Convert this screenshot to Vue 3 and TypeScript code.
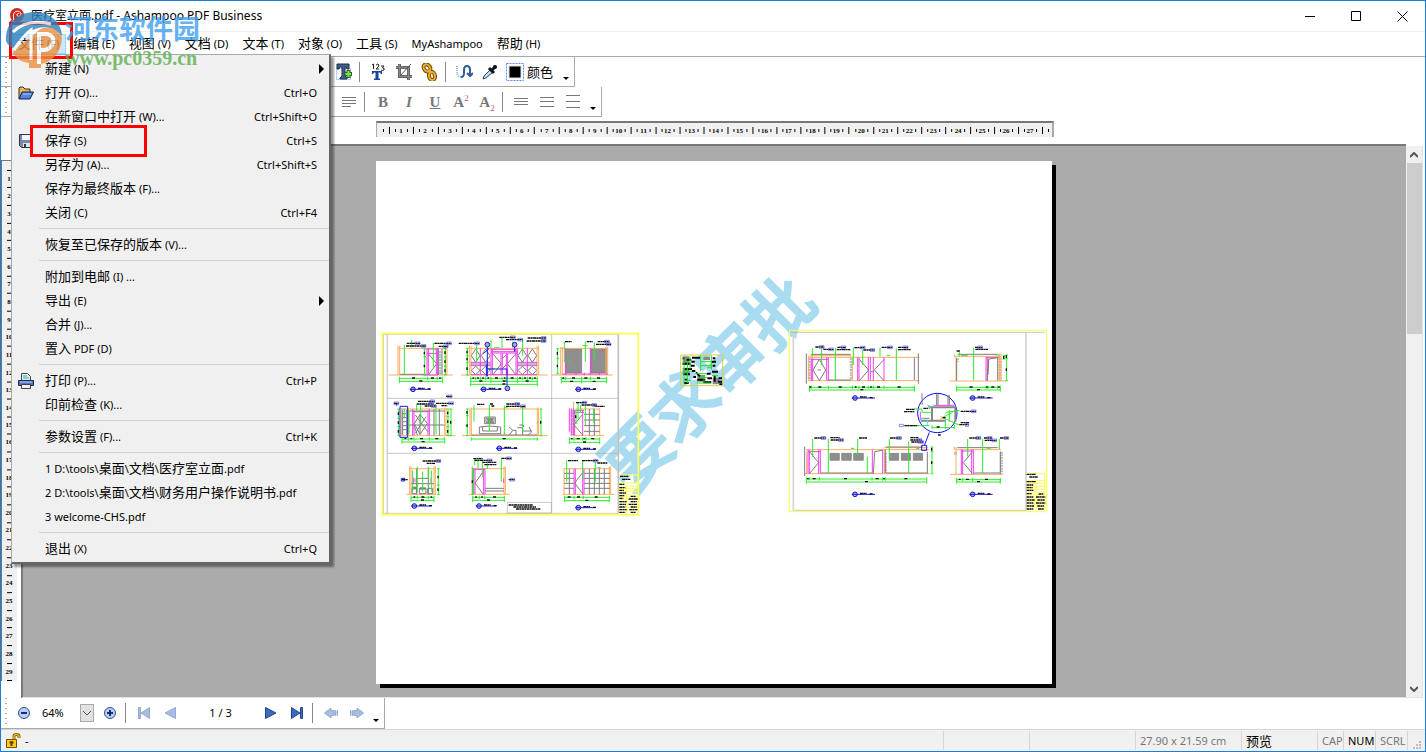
<script setup lang="ts">
import { ref } from 'vue'

interface MenuEntry {
  text: string
  key?: string
  icon?: 'folder' | 'disk' | 'printer'
  sub?: boolean
}

interface Elevation {
  orange?: string
  magenta?: string
  grey?: string
  thick?: string
  hatch?: string
  green?: string
  blue?: string
  h: number[][]
  v: number[][]
  labels: number[][]
  tag: number[]
}

/** Splits a caption into Chinese and Latin runs, which use different sizes. */
function runs(text: string): { s: string; cjk: boolean }[] {
  return (text.match(/[\u4e00-\u9fff]+|[^\u4e00-\u9fff]+/g) ?? []).map((s) => ({
    s,
    cjk: /[\u4e00-\u9fff]/.test(s),
  }))
}

const title = '医疗室立面.pdf - Ashampoo PDF Business'
const menus = ['文件 (F)', '编辑 (E)', '视图 (V)', '文档 (D)', '文本 (T)', '对象 (O)', '工具 (S)', 'MyAshampoo', '帮助 (H)']

const groups: MenuEntry[][] = [
  [
    { text: '新建 (N)', sub: true },
    { text: '打开 (O)...', key: 'Ctrl+O', icon: 'folder' },
    { text: '在新窗口中打开 (W)...', key: 'Ctrl+Shift+O' },
    { text: '保存 (S)', key: 'Ctrl+S', icon: 'disk' },
    { text: '另存为 (A)...', key: 'Ctrl+Shift+S' },
    { text: '保存为最终版本 (F)...' },
    { text: '关闭 (C)', key: 'Ctrl+F4' },
  ],
  [{ text: '恢复至已保存的版本 (V)...' }],
  [
    { text: '附加到电邮 (I) ...' },
    { text: '导出 (E)', sub: true },
    { text: '合并 (J)...' },
    { text: '置入 PDF (D)' },
  ],
  [
    { text: '打印 (P)...', key: 'Ctrl+P', icon: 'printer' },
    { text: '印前检查 (K)...' },
  ],
  [{ text: '参数设置 (F)...', key: 'Ctrl+K' }],
  [
    { text: '1 D:\\tools\\桌面\\文档\\医疗室立面.pdf' },
    { text: '2 D:\\tools\\桌面\\文档\\财务用户操作说明书.pdf' },
    { text: '3 welcome-CHS.pdf' },
  ],
  [{ text: '退出 (X)', key: 'Ctrl+Q' }],
]

const zoom = ref('64%')
const pageField = ref('1 / 3')

const leftSheet: Elevation[] = [
  {
    orange: 'M38 150H230M66 62V150M71 62V150M66 70H212M208 64V150M213 64V150',
    magenta: 'M146 150H186M153 70V150M157 70V150M181 70V150M185 70V150M153 72H185M153 85H185',
    grey: 'M157 86L182 116L157 150M71 148H150M187 70V150M198 70V150',
    hatch: 'M192 78V150',
    green: 'M85 60V148M107 45V68M172 55V125M185 55H172',
    h: [[160, 70, 155, 184, 200], [169, 70, 200]],
    v: [[208, 70, 96, 124, 150], [146, 72, 95, 150]],
    labels: [[92, 55, 40, 1], [90, 63, 60, 1], [176, 55, 50, 1], [188, 64, 28, 1]],
    tag: [111, 193, 52],
  },
  {
    orange: 'M255 150H515M280 62V150M285 62V150M483 62V150M488 62V150M280 70H488',
    magenta: 'M345 70V150M349 70V150M375 85V150M379 85V150M391 85V150M395 85V150M420 70V150M424 70V150M345 73H424M345 80H424M345 84H424M284 112H344M284 122H344M424 112H484M424 122H484M284 149H484M313 70V150M454 70V150',
    grey: 'M299 72L286 92L299 112L312 92ZM329 72L316 92L329 112L342 92ZM439 72L426 92L439 112L452 92ZM469 72L456 92L469 112L482 92ZM299 124L286 136L299 149L312 136ZM329 124L316 136L329 149L342 136ZM439 124L426 136L439 149L452 136ZM469 124L456 136L469 149L482 136ZM350 86L376 116L350 150M420 86L394 116L420 150M380 100L390 90M380 130L390 120M284 117H344M424 117H484',
    green: 'M302 60V112M345 45V70M355 68H370M378 38V70M410 50V68M440 45V92M336 130H356',
    blue: 'M334 66V154M331 118V154M416 66V80M334 132H393V182M322 86L340 70',
    h: [[160, 284, 299, 313, 329, 345, 378, 393, 424, 439, 454, 469, 484], [169, 284, 345, 424, 484], [178, 284, 484]],
    v: [[274, 70, 92, 112, 150]],
    labels: [[248, 55, 62, 1], [370, 37, 48, 1], [390, 44, 50, 1], [455, 39, 55, 1], [452, 48, 58, 1]],
    tag: [323, 193, 52],
  },
  {
    orange: 'M528 150H710M554 66V150M559 66V150M690 66V150M695 66V150M554 70H695',
    magenta: 'M560 147H695M568 70V150M643 70V150M600 143V150M625 143V150M670 143V150',
    thick: 'M569 71H617V144H569ZM644 71H692V144H644Z',
    green: 'M565 50V110H580M628 50V110M655 52V108M620 62H635',
    h: [[160, 556, 568, 617, 643, 692], [170, 556, 617, 692]],
    v: [[545, 70, 100, 146]],
    labels: [[567, 50, 20, 0], [632, 50, 18, 0], [665, 50, 35, 1], [660, 58, 45, 1]],
    tag: [607, 193, 52],
  },
  {
    orange: 'M70 332H238M77 248V332M206 248V332M210 248V332M77 252H210M97 250V332',
    magenta: 'M110 252V332M114 262V332M156 262V332M160 252V332M110 260H160',
    grey: 'M100 258H206M100 300H206M174 252V332M190 252V332M115 296L132 268L154 296L132 328ZM132 268V328M118 270L155 320M118 325L150 275M114 300L124 330M80 254V330M92 254V330M80 266H92M80 278H92M80 290H92M80 302H92M80 314H92',
    blue: 'M72 244H95V337H72ZM62 235V242',
    green: 'M99 256V326M122 240V262M134 235V300M180 240V328M85 250V280',
    h: [[342, 78, 97, 114, 160, 206], [351, 78, 206]],
    v: [[216, 252, 275, 305, 332], [225, 252, 332], [68, 252, 280, 305, 332]],
    labels: [[126, 229, 50, 1], [122, 237, 50, 1], [146, 243, 34, 1], [180, 235, 52, 1], [210, 214, 18, 1], [54, 235, 14, 1], [196, 242, 18, 0]],
    tag: [115, 370, 54],
  },
  {
    orange: 'M258 332H515M282 248V332M286 248V332M484 248V332M488 248V332M286 252H484',
    grey: 'M326 276H358V296H326ZM330 280H354V292H330ZM310 306Q342 300 374 306V326H310ZM320 306V318H364V306M400 306L410 316L400 330M410 316H420V330M424 308H440V330M440 318H468M460 306L466 322L454 332M430 300H442V306M286 330H484',
    thick: 'M335 282H350V290H335Z',
    green: 'M294 240V290M340 240V318M385 242V330M440 244V318M386 248H394M484 290V295',
    h: [[342, 286, 484]],
    v: [[274, 252, 272, 332], [495, 252, 332]],
    labels: [[303, 238, 22, 0], [342, 237, 10, 0], [346, 243, 10, 0], [391, 237, 40, 1], [390, 244, 58, 1]],
    tag: [370, 370, 54],
  },
  {
    orange: 'M590 332H685M593 230V332M671 250V332M600 252H671',
    magenta: 'M580 250V320M586 250V332M592 250V332M596 256V332M620 256V332M592 256H624M592 262H624',
    grey: 'M620 268L594 300L620 330M624 268H671M624 285H671M624 302H671M624 319H671M640 252V332M655 252V332',
    hatch: 'M588 254V330',
    green: 'M606 234V282M614 240V262M628 244V300M653 250V293',
    h: [[342, 580, 594, 620, 630, 671], [352, 580, 671]],
    v: [[600, 256, 294]],
    labels: [[600, 233, 32, 1], [617, 240, 45, 1], [656, 244, 30, 0]],
    tag: [607, 373, 52],
  },
  {
    orange: 'M92 508H180M101 424V508M105 424V508M174 424V508M178 424V508M101 431H178',
    grey: 'M122 431V508M157 431V508M105 476H174M122 460H157M108 490H122V506H108ZM130 490H150V506H130ZM155 490H170V506H155Z',
    thick: 'M108 486H120V492H108ZM132 488H148V493H132Z',
    magenta: 'M112 458V474M117 460V472M165 458V474',
    green: 'M110 436V500M124 425V500M140 440V500M157 425V460M167 436V500',
    blue: 'M76 460H86V468H76Z',
    h: [[517, 105, 124, 157, 174], [526, 105, 174]],
    v: [[187, 431, 480, 508]],
    labels: [[140, 408, 54, 1], [152, 415, 26, 0], [78, 464, 18, 0]],
    tag: [115, 543, 52],
  },
  {
    orange: 'M278 508H400M289 424V508M384 424V508M388 424V508M289 431H388',
    magenta: 'M293 431V508M297 431V508M323 431V508M327 431V508M293 433H327M383 460V474',
    grey: 'M322 440L297 474L322 508M327 490H384M327 498H384M289 436V506',
    green: 'M296 400V420M306 405V430M319 408V456M334 415V432M376 402V470M291 432V505',
    h: [[517, 290, 310, 326, 385], [526, 290, 385]],
    v: [[290, 431, 508]],
    labels: [[292, 401, 28, 0], [296, 406, 52, 1], [320, 412, 42, 0], [325, 419, 36, 0], [376, 400, 30, 1], [398, 464, 18, 1]],
    tag: [309, 543, 52],
  },
  {
    orange: 'M560 508H716M564 430V508M700 424V508M704 424V508M564 431H704',
    magenta: 'M594 431V508M598 431V508M620 431V508M624 431V508',
    grey: 'M622 440L596 474L622 508M564 445H594M564 460H594M564 475H594M564 490H594M580 431V508M624 445H702M624 460H702M624 475H702M624 490H702M640 431V508M655 431V508M670 431V508M685 431V508',
    green: 'M572 405V470M620 408V460M658 410V470M665 428H674',
    h: [[517, 566, 594, 622, 700], [527, 566, 700]],
    v: [],
    labels: [[576, 407, 30, 0], [618, 407, 48, 1], [664, 414, 30, 0]],
    tag: [607, 548, 52],
  },
]

const rightSheet: Elevation[] = [
  {
    orange: 'M68 167H400M68 97H400M75 92H195M75 88V97M193 88V97M68 92V167M199 97V167',
    magenta: 'M76 100V167M80 100V167M122 97V167M127 97V167M76 103H127M215 97V167M219 97V167M247 97V167M253 97V167M262 97V167M294 97V167',
    grey: 'M61 85V176M397 85V176M100 103L81 135L100 167L119 135ZM95 135H105M220 103L248 135L220 167M294 103L265 135L294 167M75 88H193M385 97V165M126 165H195M253 140H262',
    hatch: 'M70 100V167M196 100V167',
    green: 'M80 70V95M107 72V120M148 68V165M202 68V120M230 76V120M282 68V95M331 70V165M302 92H312',
    h: [[187, 70, 76, 127, 199, 219, 247, 262, 294, 385], [195, 70, 385]],
    v: [],
    labels: [[88, 66, 26, 1], [112, 73, 30, 1], [154, 67, 25, 1], [152, 74, 42, 0], [205, 68, 32, 1], [232, 75, 34, 1], [287, 67, 32, 1], [336, 67, 30, 1], [336, 74, 38, 0]],
    tag: [207, 219, 60],
  },
  {
    orange: 'M490 168H660M505 94H645M505 88V97M510 97V168M640 85V168M645 85V168',
    magenta: 'M600 97V167M604 97V167M600 98H640',
    grey: 'M515 88H635M512 100V167M606 150L608 102L636 98M603 167L608 102M635 100V167',
    hatch: 'M642 100V167M514 100V110',
    green: 'M563 68V167M520 76V95M628 90H640M525 92H545',
    h: [[187, 512, 600, 606, 635, 643], [195, 512, 643]],
    v: [[662, 90, 100, 167], [654, 92, 102]],
    labels: [[567, 67, 22, 1], [568, 73, 38, 0], [512, 78, 10, 0]],
    tag: [560, 219, 60],
  },
  {
    orange: 'M60 374H430M55 446H430M295 374V446M294 368H425M420 366V374M62 380V446',
    magenta: 'M66 374V446M70 374V446M98 374V446M103 374V446M66 380H103M259 374V446M290 374V446',
    grey: 'M56 365V453M72 382L98 413L72 444M300 366H410M105 444H258M262 446L266 380L288 376M301 444H425M298 374V444M424 380V445',
    thick: 'M132 385H160V406H132ZM167 385H196V406H167ZM203 385H232V406H203ZM310 385H338V406H310ZM346 385H374V406H346ZM382 385H410V406H382Z',
    hatch: 'M298 384V444',
    green: 'M80 342V395M127 342V444M215 342V390M310 342V400M368 350V444M244 395V444M390 370H400M195 370H205',
    blue: 'M430 322L415 362M407 361H422V376H407Z',
    h: [[462, 61, 70, 100, 258, 290, 298, 422], [471, 61, 422]],
    v: [[438, 366, 380, 446]],
    labels: [[85, 339, 34, 1], [133, 338, 28, 0], [134, 345, 38, 1], [219, 339, 24, 0], [312, 339, 34, 1], [373, 338, 24, 0], [373, 345, 34, 1], [376, 351, 36, 1]],
    tag: [207, 508, 60],
  },
  {
    orange: 'M492 448H650M505 374H645M510 366V448M505 366V374M640 364V374',
    magenta: 'M526 374V448M530 374V448M557 374V448M562 374V448M526 378H562',
    grey: 'M514 368H635M558 382L532 413L558 444M562 444H643M643 380V446',
    hatch: 'M646 380V446M508 380V390',
    green: 'M545 342V395M590 342V444M640 342V372M602 370H614',
    h: [[464, 512, 530, 560, 643], [471, 512, 643]],
    v: [],
    labels: [[550, 339, 34, 1], [594, 339, 24, 1], [596, 346, 36, 1], [642, 339, 26, 1]],
    tag: [560, 508, 60],
  },
]

/** Green dimension chains of an elevation. */
function dims(e: Elevation): string {
  const h = e.h.map(([y, ...xs]) => `M${xs[0]} ${y}H${xs[xs.length - 1]}` + xs.map((x) => `M${x} ${y - 5}v10`).join(''))
  const v = e.v.map(([x, ...ys]) => `M${x} ${ys[0]}V${ys[ys.length - 1]}` + ys.map((y) => `M${x - 4} ${y}h8`).join(''))
  return h.join('') + v.join('')
}

/** Black figures in the middle of each dimension. */
function figures(e: Elevation): string {
  const out: string[] = []
  for (const [y, ...xs] of e.h) {
    for (let i = 1; i < xs.length; i++) {
      const mid = Math.round((xs[i] + xs[i - 1]) / 2)
      const w = xs[i] - xs[i - 1] > 20 ? 10 : 5
      out.push(`M${mid - w / 2} ${y - 1}h${w}`)
    }
  }
  for (const [x, ...ys] of e.v) {
    for (let i = 1; i < ys.length; i++) out.push(`M${x - 1} ${Math.round((ys[i] + ys[i - 1]) / 2) - 4}v8`)
  }
  return out.join('')
}

const captions = (e: Elevation): string => e.labels.map(([x, y, w]) => `M${x} ${y}h${w}`).join('')
const marks = (e: Elevation): string =>
  e.labels.filter((l) => l[3]).map(([x, y, w]) => `M${x + w - 14} ${y - 4}h14v8h-14z`).join('')

const sheets = [
  { id: 'left', shift: 'translate(0 492)', items: leftSheet },
  { id: 'right', shift: 'translate(1230 492)', items: rightSheet },
]

const hMarks = Array.from({ length: 27 }, (_, i) => i + 1)
const vMarks = Array.from({ length: 29 }, (_, i) => i + 1)
const CM_X = 2423
const CM_Y = 1764
const hx = (n: number): number => Math.round((n * CM_X) / 100)
const vy = (n: number): number => Math.round((n * CM_Y) / 100)
const hTall = Array.from({ length: 28 }, (_, i) => `M${hx(i + 0.5)} 4v7`).join('')
const hShort = Array.from({ length: 28 }, (_, i) => `M${hx(i + 0.25)} 6v3M${hx(i + 0.75)} 6v3`).join('')
const vTicks = Array.from({ length: 30 }, (_, i) => `M5 ${vy(i + 0.5)}h5`).join('')
</script>

<template>
  <div class="window">
    <header class="titlebar">
      <svg class="app-logo" viewBox="0 0 16 16" width="16" height="16" aria-hidden="true">
        <circle cx="8" cy="7" r="7" fill="#d3261c" />
        <path d="M1 15L5 10" stroke="#d3261c" stroke-width="2" />
        <path d="M4 13C6 10 3 8 5 5C7 2 12 3 12 6C12 9 8 9 8 7C8 5 10 5 10 6" fill="none" stroke="#fff" stroke-width="1" />
      </svg>
      <h1 class="title">
        <span v-for="(r, i) in runs(title)" :key="i">{{ r.s }}</span>
      </h1>
      <div class="win-buttons">
        <button type="button" aria-label="最小化"><svg viewBox="0 0 11 11" width="11" height="11"><path d="M0 5.5H10" /></svg></button>
        <button type="button" aria-label="最大化"><svg viewBox="0 0 11 11" width="11" height="11"><path d="M.5 .5H9.500V9.500H.5Z" /></svg></button>
        <button type="button" aria-label="关闭"><svg viewBox="0 0 11 11" width="11" height="11"><path d="M.5 .5L10.500 10.500M10.500 .5L.5 10.500" /></svg></button>
      </div>
    </header>

    <nav class="menubar">
      <button v-for="(m, i) in menus" :key="m" type="button" :class="{ active: i === 0 }">
        <span v-for="(r, j) in runs(m)" :key="j" :class="{ cjk: r.cjk }">{{ r.s }}</span>
      </button>

      <div class="dropdown" role="menu">
        <div v-for="(g, gi) in groups" :key="gi" class="group">
          <button v-for="e in g" :key="e.text" type="button" role="menuitem" class="entry">
            <span class="entry-icon">
              <svg v-if="e.icon === 'folder'" viewBox="0 0 16 14" width="16" height="14">
                <path d="M1 13V2L2 1H5L7 3H12V6" fill="#e8b45c" stroke="#3c2c10" />
                <path d="M1 13L4 6H15.500L12 13Z" fill="#4f86e0" stroke="#14214d" />
                <path d="M5 8H13" stroke="#a9c8fa" />
              </svg>
              <svg v-else-if="e.icon === 'disk'" viewBox="0 0 14 14" width="14" height="14">
                <path d="M.5 .5H13.500V13.500H2.500L.5 11.500Z" fill="#7b88a8" stroke="#30364a" />
                <path d="M3 1H11V6H3Z" fill="#f2f5fb" />
                <path d="M4 9H11V13H4Z" fill="#dde3ee" />
                <path d="M5 10H7V13H5Z" fill="#30364a" />
              </svg>
              <svg v-else-if="e.icon === 'printer'" viewBox="0 0 16 16" width="16" height="16">
                <path d="M3.500 7V.5H9.500L12.500 3.500V7" fill="#d8f0f0" stroke="#3d4f55" />
                <path d="M5 3H9M5 5H11" stroke="#57a4a8" />
                <path d="M.5 7.500H15.500V12.500H.5Z" fill="#5575c4" stroke="#1d2750" />
                <path d="M2 9H14" stroke="#b8ccf5" />
                <path d="M3.500 11.500H12.500V15.500H3.500Z" fill="#f3f3f3" stroke="#3d4047" />
              </svg>
            </span>
            <span class="entry-text"><span v-for="(r, j) in runs(e.text)" :key="j" :class="{ cjk: r.cjk }">{{ r.s }}</span></span>
            <span v-if="e.key" class="entry-key">{{ e.key }}</span>
            <svg v-if="e.sub" class="entry-sub" viewBox="0 0 5 10" width="5" height="10"><path d="M0 0L5 5L0 10Z" /></svg>
          </button>
        </div>
      </div>
    </nav>

    <div class="toolbar row-one">
      <button type="button" aria-label="添加文本框">
        <svg viewBox="0 0 18 18" width="18" height="18">
          <path d="M1.500 5.500H15.500V16.500H1.500Z" fill="none" stroke="#6d9cf0" stroke-dasharray="1 1" />
          <path d="M2 1H14V6H12L11 4H10V13L12 15V16H5V15L7 13V4H5L4 6H2Z" fill="#3f5f8c" stroke="#1e2c45" />
          <path d="M13.500 7V15M9.500 11H17" stroke="#2f6a20" stroke-width="4" />
          <path d="M13.500 8V14M10.500 11H16" stroke="#7fe060" stroke-width="2" />
        </svg>
      </button>
      <i class="sep" />
      <button type="button" aria-label="编号">
        <svg viewBox="0 0 18 18" width="18" height="18">
          <path d="M3 2L4.500 1V6M7 2Q9 0 10 2Q10 4 7 6H10M12 3H15L13.500 5Q16 5 15 7Q14 8 12 7" fill="none" stroke="#222" />
          <path d="M3 8H13V11H12L11 9.500H9.500V15.500H11V17H5V15.500H6.500V9.500H5L4 11H3Z" fill="#17449c" />
        </svg>
      </button>
      <button type="button" aria-label="裁剪">
        <svg viewBox="0 0 18 18" width="18" height="18" fill="none">
          <path d="M4.500 1V13.500H17M1 4.500H13.500V17" stroke="#666" stroke-width="3" />
          <path d="M4.500 1V13.500H17M1 4.500H13.500V17" stroke="#888" stroke-width="1" />
          <path d="M5 13L16 1" stroke="#555" />
        </svg>
      </button>
      <button type="button" aria-label="链接">
        <svg viewBox="0 0 18 18" width="18" height="18" fill="none">
          <ellipse cx="6" cy="5" rx="3" ry="4" transform="rotate(-40 6 5)" stroke="#69450a" stroke-width="4" />
          <ellipse cx="11" cy="13" rx="3" ry="4" transform="rotate(-10 11 13)" stroke="#69450a" stroke-width="4" />
          <ellipse cx="6" cy="5" rx="3" ry="4" transform="rotate(-40 6 5)" stroke="#edae2d" stroke-width="2" />
          <ellipse cx="11" cy="13" rx="3" ry="4" transform="rotate(-10 11 13)" stroke="#edae2d" stroke-width="2" />
          <path d="M7 7L11 10" stroke="#edae2d" stroke-width="2" />
        </svg>
      </button>
      <i class="sep" />
      <button type="button" aria-label="文本流">
        <svg viewBox="0 0 18 18" width="18" height="18" fill="none" stroke="#34599c" stroke-width="2">
          <path d="M2 3V8Q2 14 6 14" stroke-dasharray="1 1" stroke="#8badde" />
          <path d="M6 14Q9 14 9 10V7Q9 3 12 3Q15 3 15 7V12M12 10L15 13L18 10" />
        </svg>
      </button>
      <button type="button" aria-label="吸管">
        <svg viewBox="0 0 18 18" width="18" height="18">
          <path d="M2 16L3 13L9 7L12 9L5 15Z" fill="#b8dcf3" stroke="#345" />
          <path d="M8 5L13 10M10 8L15 3" stroke="#15151c" stroke-width="3" />
          <circle cx="14" cy="4" r="2" fill="#15151c" />
        </svg>
      </button>
      <button type="button" aria-label="颜色" class="swatch">
        <svg viewBox="0 0 18 18" width="18" height="18">
          <path d="M.5 .5H17.500V17.500H.5Z" fill="#fff" stroke="#5b8def" stroke-dasharray="2 1" />
          <path d="M3 3H15V15H3Z" fill="#000" stroke="#ddd" />
        </svg>
      </button>
      <span class="cjk">颜色</span>
      <i class="caret" />
    </div>

    <div class="toolbar row-two">
      <button type="button" aria-label="两端对齐"><svg viewBox="0 0 16 12" width="16" height="12"><path d="M1 1.500H15M1 4.500H15M1 7.500H15M1 10.500H10" stroke="#777" /></svg></button>
      <i class="sep" />
      <button type="button" class="glyph">B</button>
      <button type="button" class="glyph italic">I</button>
      <button type="button" class="glyph under">U</button>
      <button type="button" class="glyph">A<sup>2</sup></button>
      <button type="button" class="glyph">A<sub>2</sub></button>
      <i class="sep" />
      <button type="button" aria-label="紧凑行距"><svg viewBox="0 0 14 14" width="14" height="14"><path d="M0 3.500H14M0 6.500H14M0 9.500H14" stroke="#777" /></svg></button>
      <button type="button" aria-label="中等行距"><svg viewBox="0 0 14 14" width="14" height="14"><path d="M0 2.500H14M0 6.500H14M0 11.500H14" stroke="#777" /></svg></button>
      <button type="button" aria-label="宽行距"><svg viewBox="0 0 14 14" width="14" height="14"><path d="M0 .5H14M0 6.500H14M0 12.500H14" stroke="#777" /></svg></button>
      <i class="caret" />
    </div>

    <div class="h-ruler-row">
      <div class="h-ruler">
        <svg viewBox="0 0 676 13" width="100%" height="13">
          <path :d="hTall" stroke="#000" transform="translate(0.5 0)" />
          <path :d="hShort" stroke="#000" transform="translate(0.5 0)" />
          <text v-for="n in hMarks" :key="n" :x="hx(n)" y="10" text-anchor="middle">{{ n }}</text>
        </svg>
      </div>
    </div>

    <main class="work">
      <div class="v-ruler">
        <svg viewBox="0 0 16 521" width="16" height="100%" preserveAspectRatio="none">
          <path :d="vTicks" stroke="#000" transform="translate(0 0.5)" />
          <text v-for="n in vMarks" :key="n" x="7" :y="vy(n) + 2" text-anchor="middle">{{ n }}</text>
        </svg>
      </div>

      <section class="canvas">
        <svg class="page" viewBox="0 0 2028 1569">
          <text class="stamp" x="0" y="77" text-anchor="middle" transform="translate(994 663) rotate(-45)">要求审批</text>

          <g v-for="s in sheets" :key="s.id" :transform="s.shift">
            <template v-if="s.id === 'left'">
              <path class="frame" d="M34 28V564M727 28V564" />
              <path class="rule" d="M22 28V565H727V28ZM34 220H727M34 385H727M527 28V564" />
              <path class="yellow" d="M19 26H787V569H19Z" />
              <path class="yellow-thin" d="M728 450H787M728 474H787M728 483H787M728 491H787M728 499H787M728 507H787M728 515H787M728 523H787M728 531H787M728 539H787M728 547H787M728 555H787M752 483V566M787 450V566" />
              <path class="rule" d="M394 532H526V564H394Z" />
              <path class="black-text" d="M398 540H470M412 546H480M420 552H494M732 454H758M738 463H764M730 478H745M730 488H748M730 496H744M730 504H750M730 512H746M730 520H742M730 530H752M730 538H750M730 546H748M730 554H752M730 562H748M764 514H780M758 522H786M764 530H782M758 538H784M764 546H782M760 554H784M764 562H780" />
            </template>
            <template v-else>
              <path class="frame" d="M22 20V556M720 22V556" />
              <path class="rule" d="M14 22H778M22 556H720" />
              <path class="yellow-thin" d="M10 16H782V560H10ZM722 446H778M722 467H778M722 475H778M722 484H778M722 493H778M722 501H778M722 510H778M722 519H778M722 528H778M722 537H778M722 546H778M750 475V556M776 446V556" />
              <path class="black-text" d="M722 448H750M730 456H756M722 470H750M722 480H742M722 488H740M722 496H742M722 506H738M722 516H742M722 525H746M722 534H742M722 543H744M722 552H742M758 507H772M750 516H778M754 525H776M750 534H778M754 543H774M756 552H774" />
              <circle cx="454" cy="264" r="59" class="lens" />
              <path class="grey" d="M408 240V205M452 240V207M456 240V207M486 240V210M490 240V210M428 240L430 252M405 280H430M437 288V250" />
              <path class="heavy" d="M404 287H480M430 247H508M438 248V286M508 247V290" />
              <path class="magenta" d="M445 241H505M403 260V284" />
              <path class="cyan" d="M424 240L434 248M440 241H446M403 281H414M425 285V300" />
              <path class="green" d="M384 252H408V262H437M480 262L520 256M470 278L520 300M466 280L500 262M438 300V312M478 290V312M438 308H505M490 255V290M505 300V312M354 302H430" />
              <path class="orange" d="M462 272L474 284M474 272L462 284" />
              <path class="black-text" d="M360 253H386M354 260H386M356 302H394M524 259H570M524 293H550M520 299H548M452 306H462M412 250H426M456 330H464M470 278H480" />
              <path class="blue-mark" d="M340 298H352V305H340ZM556 255H570V263H556ZM538 295H548V304H538Z" />
            </template>
            <g v-for="(e, i) in s.items" :key="i">
              <path v-if="e.hatch" class="hatch" :d="e.hatch" />
              <path v-if="e.thick" class="solid" :d="e.thick" />
              <path class="orange" :d="e.orange" />
              <path v-if="e.magenta" class="magenta" :d="e.magenta" />
              <path v-if="e.grey" class="grey" :d="e.grey" />
              <path class="green" :d="e.green" />
              <path class="green" :d="dims(e)" />
              <path class="black-text" :d="figures(e)" />
              <path v-if="e.blue" class="blue" :d="e.blue" />
              <path class="black-text" :d="captions(e)" />
              <path class="blue-mark" :d="marks(e)" />
              <circle class="tag" :cx="e.tag[0]" :cy="e.tag[1]" r="7" />
              <path class="blue" :d="`M${e.tag[0] - 10} ${e.tag[1]}H${e.tag[0] + e.tag[2]}`" />
              <path class="black-text" :d="`M${e.tag[0] + 15} ${e.tag[1] - 3}h20M${e.tag[0] + 44} ${e.tag[1] - 1}h9`" />
            </g>
            <g v-if="s.id === 'left'">
              <circle class="tag" cx="334" cy="59" r="7" />
              <circle class="tag" cx="416" cy="59" r="7" />
              <circle class="tag" cx="394" cy="190" r="7" />
            </g>
          </g>

          <g transform="translate(642 312)">
            <path class="grey-blob" d="M288 274V300M288 308V330M350 275V285M322 340H345M378 338V358" />
            <path class="black-blob" d="M278 280H284M290 284H304M278 296H302M284 312H306M280 328H300M284 344H294M282 354H296M304 290H314M306 318H316M318 322L330 334M322 344H346M340 352H364M352 340H366M368 280H376M364 290H378M368 302H376M366 320H384M374 332V350M386 340H396M384 350H398M388 358H398M306 278H330M302 302H314M310 336H318M350 326H362" />
            <path class="green-blob" d="M282 274V358M292 290V354M300 276V312M332 272V318M364 272V314M332 290H364M332 302H366M316 326H350M320 354H362M342 334V350M352 308H366M366 332H384M278 320H302M286 346H304M326 338H352" />
            <path class="olive" d="M272 270H398V362H272Z" />
          </g>
        </svg>
      </section>

      <div class="scrollbar">
        <button type="button" aria-label="向上滚动"><svg viewBox="0 0 8 6" width="8" height="6"><path d="M0 5L4 1L8 5" /></svg></button>
        <div class="track"><div class="thumb" /></div>
        <button type="button" aria-label="向下滚动"><svg viewBox="0 0 8 6" width="8" height="6"><path d="M0 1L4 5L8 1" /></svg></button>
      </div>
    </main>

    <div class="navbar">
      <div class="nav-tools">
        <button type="button" aria-label="缩小">
          <svg viewBox="0 0 14 14" width="14" height="14"><circle cx="7" cy="7" r="5.500" fill="#b9d0f5" stroke="#344b94" /><path d="M4 7H10" stroke="#182d78" stroke-width="2" /></svg>
        </button>
        <label class="zoom-box">
          <select v-model="zoom" aria-label="缩放"><option>64%</option><option>100%</option></select>
          <span class="zoom-arrow"><svg viewBox="0 0 8 6" width="8" height="6"><path d="M0 1L4 5L8 1" /></svg></span>
        </label>
        <button type="button" aria-label="放大">
          <svg viewBox="0 0 14 14" width="14" height="14"><circle cx="7" cy="7" r="5.500" fill="#b9d0f5" stroke="#344b94" /><path d="M4 7H10M7 4V10" stroke="#182d78" stroke-width="2" /></svg>
        </button>
        <i class="sep" />
        <button type="button" class="dim" aria-label="第一页"><svg viewBox="0 0 12 12" width="12" height="12"><path d="M.5 .5H2.500V11.500H.5ZM11.500 .5V11.500L3 6Z" /></svg></button>
        <button type="button" class="dim" aria-label="上一页"><svg viewBox="0 0 12 12" width="12" height="12"><path d="M11.500 .5V11.500L1 6Z" /></svg></button>
        <input v-model="pageField" aria-label="页码" />
        <button type="button" class="strong" aria-label="下一页"><svg viewBox="0 0 12 12" width="12" height="12"><path d="M.5 .5V11.500L11 6Z" /></svg></button>
        <button type="button" class="strong" aria-label="最后一页"><svg viewBox="0 0 12 12" width="12" height="12"><path d="M.5 .5V11.500L9 6ZM9.500 .5H11.500V11.500H9.500Z" /></svg></button>
        <i class="sep" />
        <button type="button" class="dim" aria-label="后退"><svg viewBox="0 0 14 12" width="14" height="12"><path d="M.5 6L7 1V3.500H10V8.500H7V11ZM11 3.500H11.500V8.500H11ZM13 3.500H13.500V8.500H13Z" /></svg></button>
        <button type="button" class="dim" aria-label="前进"><svg viewBox="0 0 14 12" width="14" height="12"><path d="M13.500 6L7 1V3.500H4V8.500H7V11ZM2.500 3.500H3V8.500H2.500ZM.5 3.500H1V8.500H.5Z" /></svg></button>
        <i class="caret" />
      </div>
    </div>

    <footer class="status">
      <div class="cell lead">
        <svg viewBox="0 0 16 16" width="16" height="16">
          <path d="M9 6V3Q9 1.500 11.500 1.500Q14 1.500 14 3V5" fill="none" stroke="#8a6a00" stroke-width="3" />
          <path d="M9 6V3Q9 1.500 11.500 1.500Q14 1.500 14 3V5" fill="none" stroke="#ffd83a" />
          <path d="M1.500 6.500H11.500V14.500H1.500Z" fill="#ffc915" stroke="#6e5200" />
          <path d="M4.500 9.500H8.500M6.500 8V13" stroke="#5a4300" stroke-width="2" />
        </svg>
        <span>-</span>
      </div>
      <div class="cell w-a" />
      <div class="cell w-b" />
      <div class="cell w-b muted">27.90 x 21.59 cm</div>
      <div class="cell w-c"><span class="cjk">预览</span></div>
      <div class="cell w-d muted">CAP</div>
      <div class="cell w-e">NUM</div>
      <div class="cell w-e muted">SCRL</div>
      <div class="cell w-f">
        <svg viewBox="0 0 9 9" width="9" height="9"><path d="M7 0h2v2h-2zM7 3h2v2h-2zM7 6h2v2h-2zM4 3h2v2h-2zM4 6h2v2h-2zM1 6h2v2h-2z" fill="#bbb" /></svg>
      </div>
    </footer>

    <div class="site-mark" aria-hidden="true">
      <svg viewBox="0 0 62 60" width="62" height="60">
        <path d="M1 31C0 10 16 2 30 2C46 2 57 14 57 26C44 12 26 14 8 38C4 36 2 34 1 31Z" fill="#2d82bd" />
        <path d="M8 42C14 34 24 30 34 20C44 14 54 20 57 28C56 44 46 52 36 54V58H24V53C16 52 10 48 8 42Z" fill="#ee8f3e" />
        <path d="M8 22Q22 8 46 14M9 40Q18 26 26 20V50" fill="none" stroke="#fff" stroke-width="3" />
        <path d="M34 54V24H42Q50 26 48 33Q45 41 35 40" fill="none" stroke="#fff" stroke-width="4" />
      </svg>
      <div class="site-text">
        <strong>河东软件园</strong>
        <em>www.pc0359.cn</em>
      </div>
    </div>
    <div class="hint hint-menu" aria-hidden="true" />
    <div class="hint hint-save" aria-hidden="true" />
  </div>
</template>

<style>
html,
body {
  margin: 0;
  background: #fff;
}
</style>

<style scoped>
.window {
  --page-h: calc(100vh - 229px);
  --page-w: calc(var(--page-h) * 676 / 523);
  position: relative;
  box-sizing: border-box;
  display: flex;
  flex-direction: column;
  height: 100vh;
  overflow: hidden;
  border: 1px solid #1a7fd4;
  background: #fff;
  color: #000;
  font: 11px/16px 'Noto Sans', 'Noto Sans CJK SC', sans-serif;
}
button,
input,
select {
  margin: 0;
  padding: 0;
  border: 0;
  background: none;
  color: inherit;
  font: inherit;
}
svg {
  display: block;
}
.cjk {
  font-size: 13px;
  line-height: 1px;
  font-family: 'Noto Sans CJK SC', sans-serif;
}
.titlebar {
  display: flex;
  align-items: center;
  height: 30px;
  flex: none;
}
.app-logo {
  margin: 0 6px 0 8px;
}
.title {
  flex: 1;
  margin: 0;
  font-weight: 400;
  font-size: 12px;
  white-space: pre;
}
.win-buttons {
  display: flex;
}
.win-buttons button {
  display: grid;
  place-items: center;
  width: 46px;
  height: 28px;
}
.win-buttons path {
  fill: none;
  stroke: #000;
}
.menubar {
  position: relative;
  z-index: 2;
  display: flex;
  align-items: center;
  flex: none;
  height: 24px;
  padding-left: 10px;
  border-top: 1px solid #f0f0f0;
  border-bottom: 1px solid #aaa;
}
.menubar > button {
  height: 20px;
  padding: 0 6px;
  border: 1px solid transparent;
  white-space: pre;
  line-height: 18px;
}
.menubar > .active {
  background: #cce8ff;
  border-color: #99d1ff;
}
.dropdown {
  position: absolute;
  left: 10px;
  top: 22px;
  box-sizing: border-box;
  width: 320px;
  padding: 2px 0 1px;
  background: #f0f0f0;
  border: 1px solid #a9a9a9;
  border-right: 2px solid #666;
  border-bottom: 2px solid #666;
  box-shadow: 3px 3px 2px rgba(0, 0, 0, 0.4);
}
.group + .group {
  position: relative;
  padding-top: 8px;
}
.group + .group::before {
  content: '';
  position: absolute;
  left: 27px;
  right: 0;
  top: 3px;
  height: 1px;
  background: #d0d0d0;
}
.entry {
  display: flex;
  align-items: center;
  width: 100%;
  height: 24px;
  padding-right: 12px;
  text-align: left;
}
.entry-icon {
  display: grid;
  place-items: center;
  width: 27px;
  flex: none;
}
.entry-text {
  flex: 1;
  padding-left: 6px;
  white-space: pre;
}
.entry-sub {
  margin-right: -7px;
}
.toolbar {
  box-sizing: border-box;
  display: flex;
  align-items: center;
  align-self: flex-start;
  flex: none;
  height: 30px;
  padding-left: 330px;
  border-right: 1px solid #aaa;
  border-bottom: 1px solid #aaa;
  background: radial-gradient(circle, #aaa 1px, transparent 1px) 3px 3px / 4px 5px repeat-y;
}
.row-two {
  padding-left: 335px;
}
.toolbar button {
  display: grid;
  place-items: center;
  width: 26px;
  height: 26px;
}
.toolbar .swatch {
  width: 24px;
}
.sep {
  width: 1px;
  height: 20px;
  margin: 0 5px 0 2px;
  background: #888;
}
.caret {
  align-self: flex-end;
  margin: 0 5px 6px 4px;
  border: 3px solid transparent;
  border-top-color: #000;
  border-bottom: 0;
}
.row-one .caret {
  margin-left: 10px;
}
.toolbar .glyph {
  display: block;
  color: #777;
  font: bold 15px/26px 'Liberation Serif', serif;
  text-align: center;
}
.toolbar .italic {
  font-style: italic;
}
.toolbar .under {
  text-decoration: underline;
}
.glyph sup,
.glyph sub {
  color: #b66;
  font-weight: 400;
  font-size: 9px;
  line-height: 0;
}
.h-ruler-row {
  display: flex;
  justify-content: center;
  flex: none;
  height: 27px;
  padding: 0 19px 0 22px;
}
.h-ruler {
  box-sizing: border-box;
  width: calc(var(--page-w) + 2px);
  height: 16px;
  margin-top: 4px;
  border: solid #aaa;
  border-width: 2px 2px 0 1px;
  border-top-color: #777;
  background: #f0f0f0;
}
.h-ruler text,
.v-ruler text {
  font: bold 7px 'Liberation Serif', serif;
}
.work {
  display: flex;
  flex: 1;
  min-height: 0;
}
.v-ruler {
  box-sizing: border-box;
  width: 16px;
  height: calc(var(--page-h) - 2px);
  margin: 16px 4px 0 0;
  border-left: 1px solid #777;
  border-top: 1px solid #777;
  background: #f0f0f0;
}
.canvas {
  box-sizing: border-box;
  display: flex;
  justify-content: center;
  flex: 1;
  min-width: 0;
  overflow: hidden;
  padding: 15px 2px 0 0;
  background: #ababab;
  border-left: 2px solid #777;
  border-top: 2px solid #777;
  border-bottom: 1px solid #e3e3e3;
}
.page {
  flex: none;
  width: var(--page-w);
  height: var(--page-h);
  background: #fff;
  box-shadow: 4px 4px 0 #000;
  fill: none;
  stroke-width: 3px;
}
.stamp {
  fill: #aadcf1;
  stroke: #aadcf1;
  stroke-width: 9px;
  font: 200px 'Noto Sans CJK SC', sans-serif;
}
.frame {
  stroke: #d4d4d4;
  stroke-width: 5px;
}
.rule {
  stroke: #aaa;
  stroke-width: 2px;
}
.yellow {
  stroke: #ffff4a;
  stroke-width: 5px;
}
.yellow-thin {
  stroke: #ffff4a;
}
.orange {
  stroke: #ffad60;
}
.magenta {
  stroke: #f53df0;
}
.cyan {
  stroke: #2fe8f5;
}
.green {
  stroke: #28ee28;
}
.grey {
  stroke: #7c7c7c;
  stroke-width: 3px;
}
.heavy {
  stroke: #888;
  stroke-width: 6px;
}
.solid {
  fill: #8f8f8f;
  stroke: #777;
  stroke-width: 2px;
}
.hatch {
  stroke: #bbb;
  stroke-width: 9px;
  stroke-dasharray: 6 2;
}
.blue {
  stroke: #1a1ae6;
}
.blue-mark {
  stroke: #5555e0;
  stroke-width: 2px;
}
.lens {
  stroke: #0a0aff;
  stroke-width: 3px;
}
.tag {
  fill: #aab;
  stroke: #1414d8;
  stroke-width: 3px;
}
.black-text {
  stroke: #111;
  stroke-width: 4px;
  stroke-dasharray: 9 1 5 1;
}
.olive {
  stroke: #d6cf3c;
}
.grey-blob {
  stroke: #8a8a8a;
  stroke-width: 20px;
}
.black-blob {
  stroke: #000;
  stroke-width: 6px;
}
.green-blob {
  stroke: #20e020;
  stroke-width: 3px;
}
.scrollbar {
  display: flex;
  flex-direction: column;
  width: 16px;
  margin: 2px 2px 0 0;
  border-right: 1px solid #e3e3e3;
  border-bottom: 1px solid #e3e3e3;
  background: #f0f0f0;
}
.scrollbar button {
  display: grid;
  place-items: center;
  height: 17px;
}
.scrollbar path,
.zoom-arrow path {
  fill: none;
  stroke: #555;
  stroke-width: 2px;
}
.track {
  flex: 1;
}
.thumb {
  height: 33%;
  margin-left: 1px;
  background: #cdcdcd;
}
.navbar {
  flex: none;
  display: flex;
  height: 31px;
}
.nav-tools {
  box-sizing: border-box;
  display: flex;
  align-items: center;
  height: 31px;
  padding-left: 10px;
  border-right: 1px solid #aaa;
  border-bottom: 1px solid #aaa;
  background: radial-gradient(circle, #aaa 1px, transparent 1px) 3px 3px / 4px 5px repeat-y;
}
.nav-tools button {
  display: grid;
  place-items: center;
  width: 26px;
  height: 26px;
}
.nav-tools .caret {
  margin-left: 3px;
}
.zoom-box {
  position: relative;
  width: 60px;
  height: 18px;
}
.zoom-box select {
  width: 100%;
  height: 18px;
  padding-left: 5px;
  appearance: none;
}
.zoom-arrow {
  position: absolute;
  right: 3px;
  top: 0;
  box-sizing: border-box;
  display: grid;
  place-items: center;
  width: 14px;
  height: 18px;
  border: 1px solid #aaa;
  background: #e1e1e1;
  pointer-events: none;
}
.zoom-arrow path {
  stroke-width: 1px;
}
.nav-tools input {
  width: 75px;
  height: 16px;
  text-align: center;
}
.dim path {
  fill: #a9bce0;
  stroke: #93a9d4;
}
.strong path {
  fill: #3b6bbd;
  stroke: #1f4690;
}
.status {
  box-sizing: border-box;
  display: flex;
  flex: none;
  height: 22px;
  padding: 1px 0;
  border-top: 1px solid #d7d7d7;
  background: #f0f0f0;
}
.cell {
  box-sizing: border-box;
  display: flex;
  align-items: center;
  flex: none;
  padding-left: 4px;
  border-left: 1px solid #d7d7d7;
  white-space: nowrap;
}
.lead {
  flex: 1;
  gap: 4px;
  border-left: 0;
}
.muted {
  color: #777;
}
.w-a {
  width: 86px;
}
.w-b {
  width: 106px;
}
.w-c {
  width: 76px;
}
.w-d {
  width: 26px;
}
.w-e {
  width: 32px;
}
.w-f {
  width: 18px;
  align-items: flex-end;
}
.site-mark {
  position: absolute;
  z-index: 3;
  left: 4px;
  top: 9px;
  display: flex;
  opacity: 0.8;
  pointer-events: none;
}
.site-text {
  display: flex;
  flex-direction: column;
  margin-left: -2px;
}
.site-text strong {
  color: #41a0ee;
  font: bold 27px/36px 'Noto Sans CJK SC', sans-serif;
}
.site-text em {
  color: #5cb050;
  font: bold 20px/24px 'Liberation Serif', serif;
}
.hint {
  position: absolute;
  z-index: 2;
  box-sizing: border-box;
  border: 3px solid #f00;
  pointer-events: none;
}
.hint-menu {
  left: 8px;
  top: 21px;
  width: 64px;
  height: 37px;
}
.hint-save {
  left: 29px;
  top: 124px;
  width: 117px;
  height: 32px;
}
</style>
